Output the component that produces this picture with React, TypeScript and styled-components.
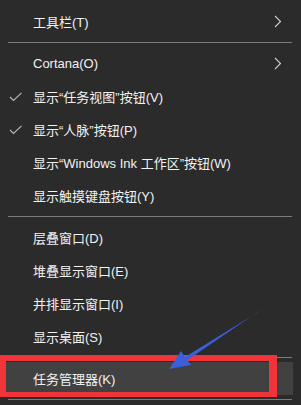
import { styled, createGlobalStyle } from 'styled-components';

const Global = createGlobalStyle`
  html, body {
    margin: 0;
    padding: 0;
    background: #2b2b2b;
  }
  body {
    font-family: 'Liberation Sans', 'Noto Sans CJK SC', sans-serif;
  }
`;

const Page = styled.div`
  position: relative;
  width: 301px;
  height: 405px;
  overflow: hidden;
  background: #2b2b2b;
`;

const Menu = styled.ul`
  list-style: none;
  margin: 0;
  padding: 5px 0 0;
  width: 293px;
  display: flex;
  flex-direction: column;
`;

const Item = styled.li<{ $active?: boolean }>`
  height: 33px;
  display: flex;
  align-items: center;
  color: #f2f2f2;
  font-size: 13px;
  background: ${(p) => (p.$active ? '#414141' : 'transparent')};
`;

const Gutter = styled.span`
  width: 32px;
  flex: none;
  display: flex;
  align-items: center;
  justify-content: center;
  padding-right: 1px;
`;

const Label = styled.span`
  flex: 1;
  white-space: nowrap;
`;

const Arrow = styled.span`
  width: 10px;
  margin-right: 9px;
  display: flex;
  align-items: center;
`;

const Separator = styled.li`
  height: 9px;
  display: flex;
  align-items: center;
  padding: 0 1px 0 8px;
  &::after {
    content: '';
    flex: 1;
    height: 1px;
    background: #7c7c7c;
  }
`;

const RedFrame = styled.div`
  position: absolute;
  left: 0;
  top: 355px;
  width: 277px;
  height: 42px;
  box-sizing: border-box;
  border: 6px solid #f0353a;
  border-bottom-width: 5px;
  border-right-width: 8px;
`;

const Overlay = styled.svg`
  position: absolute;
  left: 0;
  top: 0;
`;

const Check = () => (
  <svg width="14" height="10" viewBox="0 0 14 10">
    <polyline points="1,5 4.5,8.5 12.5,0.8" fill="none" stroke="#bdbdbd" strokeWidth="1.1" />
  </svg>
);

const Chevron = () => (
  <svg width="8" height="13" viewBox="0 0 8 13">
    <polyline points="1,1 6.5,6.5 1,12" fill="none" stroke="#cfcfcf" strokeWidth="1.1" />
  </svg>
);

type Entry = { label: string; check?: boolean; sub?: boolean; active?: boolean } | 'sep';

const entries: Entry[] = [
  { label: '工具栏(T)', sub: true },
  'sep',
  { label: 'Cortana(O)', sub: true },
  { label: '显示“任务视图”按钮(V)', check: true },
  { label: '显示“人脉”按钮(P)', check: true },
  { label: '显示“Windows Ink 工作区”按钮(W)' },
  { label: '显示触摸键盘按钮(Y)' },
  'sep',
  { label: '层叠窗口(D)' },
  { label: '堆叠显示窗口(E)' },
  { label: '并排显示窗口(I)' },
  { label: '显示桌面(S)' },
  'sep',
  { label: '任务管理器(K)', active: true },
  'sep',
];

function App() {
  return (
    <>
      <Global />
      <Page>
        <Menu>
          {entries.map((e, i) =>
            e === 'sep' ? (
              <Separator key={i} />
            ) : (
              <Item key={i} $active={e.active}>
                <Gutter>{e.check && <Check />}</Gutter>
                <Label>{e.label}</Label>
                {e.sub && (
                  <Arrow>
                    <Chevron />
                  </Arrow>
                )}
              </Item>
            )
          )}
        </Menu>
        <RedFrame />
        <Overlay width="301" height="405" viewBox="0 0 301 405">
          <polygon
            points="259,311 258.5,311.8 185,357 181,351 169,369 191,365 187.5,360"
            fill="#3b5fd9"
          />
        </Overlay>
      </Page>
    </>
  );
}

export default App;
